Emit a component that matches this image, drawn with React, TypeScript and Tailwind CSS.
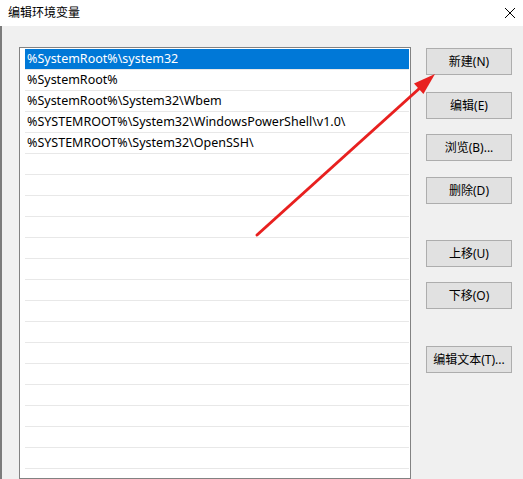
import React from 'react';

const paths = [
  '%SystemRoot%\\system32',
  '%SystemRoot%',
  '%SystemRoot%\\System32\\Wbem',
  '%SYSTEMROOT%\\System32\\WindowsPowerShell\\v1.0\\',
  '%SYSTEMROOT%\\System32\\OpenSSH\\',
];

const buttons: [string, string][] = [
  ['新建(N)', 'mt-[1px]'],
  ['编辑(E)', 'mt-[17px]'],
  ['浏览(B)...', 'mt-[15px]'],
  ['删除(D)', 'mt-[16px]'],
  ['上移(U)', 'mt-[36px]'],
  ['下移(O)', 'mt-[15px]'],
  ['编辑文本(T)...', 'mt-[37px]'],
];

export default function App() {
  const rows = Array.from({ length: 21 }, (_, i) => paths[i] ?? '');

  return (
    <div className="relative w-[523px] h-[479px] overflow-hidden bg-[#f0f0f0] text-[12px] text-black font-['Noto_Sans','Noto_Sans_CJK_SC',sans-serif]">
      <div className="h-[26px] bg-white flex items-center justify-between pl-[8px] pr-[6px]">
        <span className="leading-none">编辑环境变量</span>
        <svg width="12" height="12" viewBox="0 0 12 12" className="mr-[1px]">
          <path d="M1 1 L11 11 M11 1 L1 11" stroke="#000" strokeWidth="1" fill="none" />
        </svg>
      </div>

      <div className="flex border-l-2 border-[#7c7c7c] pl-[17px] pt-[21px] h-[453px]">
        <div className="w-[392px] shrink-0 bg-white border border-[#828282] pt-[1px] pl-[5px] pr-[1px] overflow-hidden">
          {rows.map((p, i) => (
            <div key={i}>
              <div
                className={
                  'h-[20px] flex items-center pl-[2px] pt-[1px] text-[12.5px] whitespace-nowrap ' +
                  (i === 0 ? 'bg-[#0078d7] text-white' : '')
                }
              >
                {p}
              </div>
              <div className="h-[1px] bg-[#e8e8e8]" />
            </div>
          ))}
        </div>

        <div className="ml-[15px] flex flex-col w-[86px]">
          {buttons.map(([label, m]) => (
            <button
              key={label}
              className={`${m} h-[27px] w-[86px] bg-[#e1e1e1] border border-[#adadad] flex items-center justify-center whitespace-nowrap`}
            >
              {label}
            </button>
          ))}
        </div>
      </div>

      <svg className="absolute left-0 top-0 pointer-events-none" width="523" height="479" viewBox="0 0 523 479">
        <line x1="257" y1="235" x2="421" y2="87" stroke="#e8201f" strokeWidth="3" strokeLinecap="round" />
        <polygon points="435,74 423.4,94 414,83.6" fill="#e8201f" />
      </svg>
    </div>
  );
}
